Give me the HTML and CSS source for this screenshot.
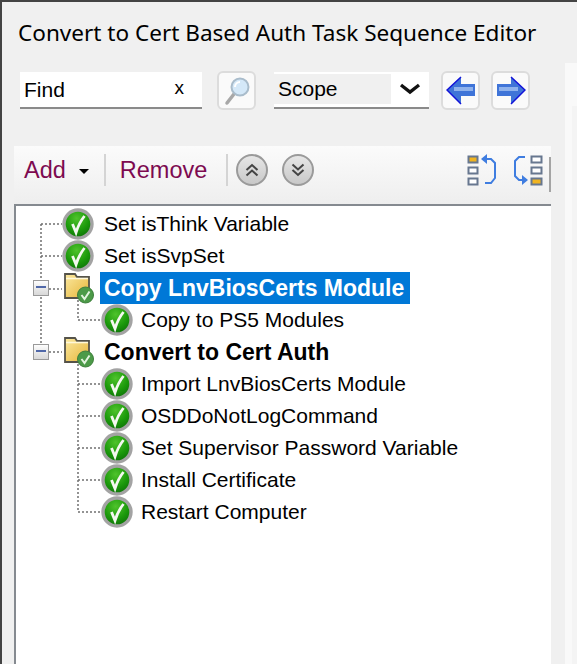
FILE: index.html
```html
<!DOCTYPE html>
<html lang="en">
<head>
    <meta charset="UTF-8">
    <title>Convert to Cert Based Auth Task Sequence Editor</title>
    <link rel="stylesheet" href="styles.css">
</head>
<body>
    <svg class="defs" width="0" height="0">
        <defs>
            <radialGradient id="greenBall" cx="0.45" cy="0.3" r="0.8">
                <stop offset="0" stop-color="#4fc32c"/>
                <stop offset="0.55" stop-color="#1a980a"/>
                <stop offset="1" stop-color="#0a6408"/>
            </radialGradient>
            <linearGradient id="folderFill" x1="0" y1="0" x2="1" y2="1">
                <stop offset="0" stop-color="#fbe9a0"/>
                <stop offset="1" stop-color="#e6b438"/>
            </linearGradient>
            <symbol id="check" viewBox="0 0 32 32">
                <circle cx="16" cy="16" r="14" fill="url(#greenBall)" stroke="#a3a3a3" stroke-width="3.4"/>
                <path d="M10.500 16 L14 24.500 C16 18 18.500 13 22.500 8" fill="none" stroke="#f4f8f0" stroke-width="2.8"/>
            </symbol>
            <symbol id="folder" viewBox="0 0 32 32">
                <path d="M3 2 H13 L15 5 H27 V26 H3 Z" fill="url(#folderFill)" stroke="#55534a" stroke-width="1.8"/>
                <path d="M4 6.500 H26" stroke="#fff8d8" stroke-width="1.6"/>
                <circle cx="23.500" cy="23" r="8" fill="#4c9a48" stroke="#3e7f3c"/>
                <path d="M19.500 23 L22.500 27 L27.500 19.500" fill="none" stroke="#e4f4e0" stroke-width="2"/>
            </symbol>
        </defs>
    </svg>

    <div class="main">
        <h1 class="title">Convert to Cert Based Auth Task Sequence Editor</h1>

        <div class="search-bar">
            <div class="find-box">
                <span>Find</span>
                <span class="clear">x</span>
            </div>
            <button class="icon-btn find-btn">
                <svg width="30" height="32" viewBox="0 0 30 32">
                    <path d="M12 19 L5 28" stroke="#a8a8a8" stroke-width="3.5" stroke-linecap="round"/>
                    <circle cx="18" cy="12" r="8.500" fill="#d4e8f8" stroke="#a9bccb" stroke-width="2"/>
                    <path d="M13 12 a5 5 0 0 1 5 -5" fill="none" stroke="#fff" stroke-width="2"/>
                </svg>
            </button>
            <div class="scope-box">
                <span class="scope-label">Scope</span>
                <span class="scope-arrow">
                    <svg width="22" height="12" viewBox="0 0 22 12">
                        <path d="M2 2 L11 9 L20 2" fill="none" stroke="#111" stroke-width="3.4"/>
                    </svg>
                </span>
            </div>
            <button class="icon-btn nav-btn">
                <svg width="30" height="30" viewBox="0 0 30 30">
                    <path d="M1 14 L15 1 V8 H29 V20 H15 V28 Z" fill="#3f74d8"/>
                    <path d="M15 1 L1 14 L15 28" fill="none" stroke="#1212d8" stroke-width="1.5"/>
                    <path d="M8 11 H27 V15 H8 Z" fill="#8fb2ec"/>
                </svg>
            </button>
            <button class="icon-btn nav-btn">
                <svg width="30" height="30" viewBox="0 0 30 30">
                    <path d="M29 14 L15 1 V8 H1 V20 H15 V28 Z" fill="#3f74d8"/>
                    <path d="M15 1 L29 14 L15 28" fill="none" stroke="#1212d8" stroke-width="1.5"/>
                    <path d="M3 11 H22 V15 H3 Z" fill="#8fb2ec"/>
                </svg>
            </button>
        </div>

        <div class="toolbar">
            <span class="tool-link add">Add</span>
            <span class="caret"></span>
            <span class="sep"></span>
            <span class="tool-link">Remove</span>
            <span class="sep sep-last"></span>
            <span class="round-btn">
                <svg width="16" height="16" viewBox="0 0 16 16">
                    <path d="M2.500 8 L8 3 L13.500 8 M2.500 13.500 L8 8.500 L13.500 13.500" fill="none" stroke="#444" stroke-width="2"/>
                </svg>
            </span>
            <span class="round-btn">
                <svg width="16" height="16" viewBox="0 0 16 16">
                    <path d="M2.500 2.500 L8 7.500 L13.500 2.500 M2.500 8 L8 13 L13.500 8" fill="none" stroke="#444" stroke-width="2"/>
                </svg>
            </span>
            <span class="toolbar-right">
                <svg width="30" height="32" viewBox="0 0 30 32">
                    <path d="M1.500 2.500 H10.500 V8.500 H1.500 Z" fill="#f0b420" stroke="#67778f" stroke-width="2"/>
                    <path d="M1.500 13.500 H10.500 V19.500 H1.500 Z M1.500 24.500 H10.500 V30.500 H1.500 Z" fill="#fff" stroke="#67778f" stroke-width="2"/>
                    <path d="M18 5 H24 L28 9 V24 L24 29 H18" fill="none" stroke="#3f7de0" stroke-width="2"/>
                    <path d="M20 0 L14 5 L20 10 Z" fill="#3f7de0"/>
                </svg>
                <svg width="30" height="32" viewBox="0 0 30 32">
                    <path d="M12 3 H6 L2 7 V22 L6 26 H10" fill="none" stroke="#3f7de0" stroke-width="2"/>
                    <path d="M9 21 L15 26 L9 31 Z" fill="#3f7de0"/>
                    <path d="M18.500 2.500 H28.500 V8.500 H18.500 Z M18.500 13.500 H28.500 V19.500 H18.500 Z" fill="#fff" stroke="#67778f" stroke-width="2"/>
                    <path d="M18.500 24.500 H28.500 V30.500 H18.500 Z" fill="#f0b420" stroke="#67778f" stroke-width="2"/>
                </svg>
            </span>
            <span class="toolbar-edge"></span>
        </div>

        <div class="tree">
            <svg class="tree-lines" width="140" height="320">
                <path d="M25 18 V75 M25 91 V139 M25 18 H46 M25 50 H46 M33 83 H46 M33 146 H46 M62 94 V114 H85 M62 158 V306 M62 178 H85 M62 210 H85 M62 242 H85 M62 274 H85 M62 306 H85"/>
            </svg>
            <div class="row root">
                <svg class="node-icon"><use href="#check"/></svg>
                <span class="label">Set isThink Variable</span>
            </div>
            <div class="row root">
                <svg class="node-icon"><use href="#check"/></svg>
                <span class="label">Set isSvpSet</span>
            </div>
            <div class="row group">
                <span class="expander"></span>
                <svg class="node-icon"><use href="#folder"/></svg>
                <span class="label bold selected">Copy LnvBiosCerts Module</span>
            </div>
            <div class="row child">
                <svg class="node-icon"><use href="#check"/></svg>
                <span class="label">Copy to PS5 Modules</span>
            </div>
            <div class="row group">
                <span class="expander"></span>
                <svg class="node-icon"><use href="#folder"/></svg>
                <span class="label bold">Convert to Cert Auth</span>
            </div>
            <div class="row child">
                <svg class="node-icon"><use href="#check"/></svg>
                <span class="label">Import LnvBiosCerts Module</span>
            </div>
            <div class="row child">
                <svg class="node-icon"><use href="#check"/></svg>
                <span class="label">OSDDoNotLogCommand</span>
            </div>
            <div class="row child">
                <svg class="node-icon"><use href="#check"/></svg>
                <span class="label">Set Supervisor Password Variable</span>
            </div>
            <div class="row child">
                <svg class="node-icon"><use href="#check"/></svg>
                <span class="label">Install Certificate</span>
            </div>
            <div class="row child">
                <svg class="node-icon"><use href="#check"/></svg>
                <span class="label">Restart Computer</span>
            </div>
        </div>
    </div>

    <div class="side">
        <div class="side-inner">
            <div class="side-pane"></div>
        </div>
    </div>
</body>
</html>
```

FILE: styles.css
```css
body {
    margin: 0;
    display: flex;
    height: 664px;
    overflow: hidden;
    box-sizing: border-box;
    background-color: #f0f0f0;
    border-top: 2px solid #444;
    border-left: 2px solid #444;
    font-family: "Liberation Sans", Arial, sans-serif;
    color: #000;
}
.defs {
    position: absolute;
}
.main {
    width: 563px;
    display: flex;
    flex-direction: column;
}
.title {
    margin: 0;
    padding: 14px 0 0 16px;
    height: 40px;
    font-family: "Noto Sans", sans-serif;
    font-size: 22.55px;
    font-weight: 400;
    line-height: 34px;
    white-space: nowrap;
}
.search-bar {
    display: flex;
    align-items: flex-start;
    padding: 15px 0 0 18px;
    height: 90px;
    box-sizing: border-box;
}
.find-box {
    width: 182px;
    height: 37px;
    box-sizing: border-box;
    display: flex;
    align-items: center;
    justify-content: space-between;
    padding: 0 18px 0 4px;
    margin-top: 1px;
    background-color: #fff;
    border-bottom: 2px solid #8a8a8a;
    font-size: 21px;
}
.clear {
    font-size: 19px;
    padding-bottom: 4px;
}
.icon-btn {
    width: 39px;
    height: 39px;
    padding: 0;
    display: flex;
    align-items: center;
    justify-content: center;
    background-color: #fafafa;
    border: 2px solid #dcdcdc;
    border-radius: 6px;
}
.find-btn {
    margin-left: 15px;
}
.scope-box {
    width: 155px;
    height: 37px;
    margin: 1px 0 0 18px;
    box-sizing: border-box;
    display: flex;
    background-color: #fff;
    border-bottom: 2px solid #8a8a8a;
    padding-top: 2px;
}
.scope-label {
    flex: 1;
    height: 30px;
    padding-left: 4px;
    background-color: #f0f0f0;
    font-size: 21px;
    line-height: 30px;
}
.scope-arrow {
    width: 38px;
    display: flex;
    align-items: center;
    justify-content: center;
    padding-bottom: 4px;
}
.nav-btn {
    margin-left: 11px;
}
.scope-box + .nav-btn {
    margin-left: 12px;
}
.toolbar {
    margin-left: 12px;
    width: 537px;
    height: 58px;
    box-sizing: border-box;
    display: flex;
    align-items: center;
    padding: 0 0 10px 10px;
    background: linear-gradient(#fbfbfb, #eeeeee);
    font-size: 23.5px;
}
.tool-link {
    color: #7d0a50;
}
.caret {
    margin: 3px 0 0 13px;
    border-top: 5px solid #000;
    border-left: 5px solid transparent;
    border-right: 5px solid transparent;
}
.sep {
    width: 2px;
    height: 32px;
    margin: 0 14px 0 15px;
    background-color: #d4d4d4;
}
.sep-last {
    margin: 0 8px 0 19px;
}
.round-btn {
    width: 32px;
    height: 32px;
    margin-right: 14px;
    box-sizing: border-box;
    display: flex;
    align-items: center;
    justify-content: center;
    background: linear-gradient(#e6e6e6, #c8c8c8);
    border: 2px solid #9a9a9a;
    border-radius: 50%;
}
.toolbar-right {
    margin-left: auto;
    display: flex;
    gap: 16px;
    margin-right: 6px;
}
.toolbar-edge {
    width: 2px;
    height: 35px;
    margin-top: 9px;
    background-color: #a4a4a4;
}
.tree {
    position: relative;
    margin-left: 12px;
    width: 537px;
    flex: 1;
    box-sizing: border-box;
    padding-top: 2px;
    background-color: #fff;
    border-top: 2px solid #858a90;
    border-left: 2px solid #858a90;
}
.tree-lines {
    position: absolute;
    left: 0;
    top: 0;
}
.tree-lines path {
    fill: none;
    stroke: #707070;
    stroke-width: 1.5;
    stroke-dasharray: 2 2;
}
.row {
    position: relative;
    height: 32px;
    display: flex;
    align-items: center;
}
.root {
    padding-left: 46px;
}
.group {
    padding-left: 17px;
}
.child {
    padding-left: 85px;
}
.expander {
    position: relative;
    width: 16px;
    height: 16px;
    margin-right: 13px;
    box-sizing: border-box;
    background: linear-gradient(#fdfdfd, #d8d8d8);
    border: 1.5px solid #9a9a9a;
}
.expander::after {
    content: "";
    position: absolute;
    left: 2px;
    right: 2px;
    top: 5px;
    height: 2px;
    background-color: #5068a8;
}
.node-icon {
    width: 32px;
    height: 32px;
    flex: none;
}
.label {
    margin-left: 6px;
    padding: 0 4px;
    height: 32px;
    font-size: 21px;
    line-height: 32px;
    white-space: nowrap;
}
.child .label {
    margin-left: 4px;
}
.bold {
    font-weight: 700;
    font-size: 23px;
}
.selected {
    padding-right: 6px;
    background-color: #0078d7;
    color: #fff;
}
.side {
    flex: 1;
    padding-top: 61px;
}
.side-inner {
    height: 100%;
    box-sizing: border-box;
    padding: 43px 0 0 7px;
    background-color: #f9f9f9;
}
.side-pane {
    height: 100%;
    background-color: #f4f4f4;
}
```
